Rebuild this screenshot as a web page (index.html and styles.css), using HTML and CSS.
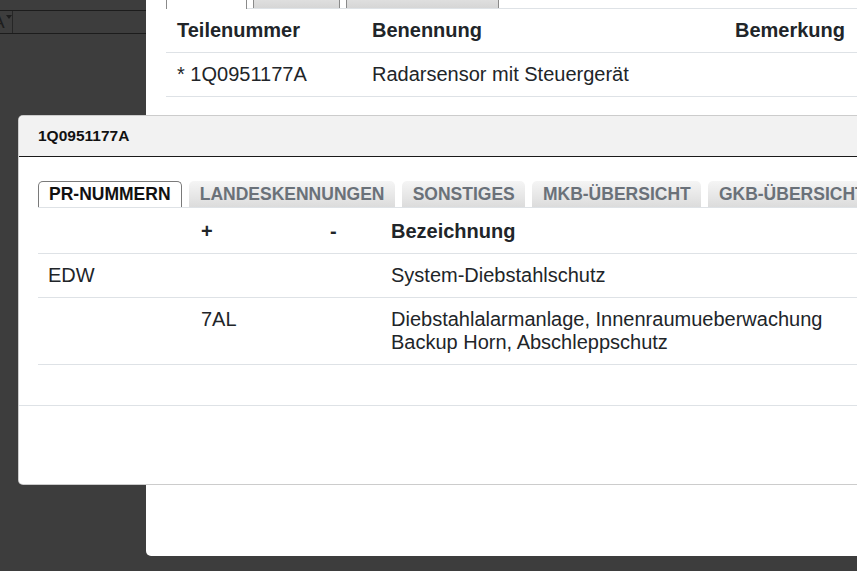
FILE: index.html
```html
<!DOCTYPE html>
<html lang="de">
<head>
    <meta charset="UTF-8">
    <meta name="viewport" content="width=device-width, initial-scale=1.0">
    <title>Teilesuche</title>
    <link rel="stylesheet" href="styles.css">
</head>
<body>
    <div class="layout">
        <!-- Sidebar -->
        <aside class="sidebar">
            <div class="toolbar">
                <div class="font-select"><span class="glyph">A</span><span class="caret"></span></div>
            </div>
        </aside>

        <!-- Parts panel -->
        <main class="panel">
            <div class="panel-tabs">
                <span class="ptab active" style="width: 81px"></span>
                <span class="ptab" style="width: 87px"></span>
                <span class="ptab" style="width: 153px"></span>
            </div>
            <table class="parts">
                <thead>
                    <tr>
                        <th class="c-nr">Teilenummer</th>
                        <th class="c-name">Benennung</th>
                        <th class="c-note">Bemerkung</th>
                    </tr>
                </thead>
                <tbody>
                    <tr>
                        <td>* 1Q0951177A</td>
                        <td>Radarsensor mit Steuergerät</td>
                        <td></td>
                    </tr>
                </tbody>
            </table>
        </main>
    </div>

    <!-- Part detail dialog -->
    <div class="dialog">
        <div class="dialog-header">1Q0951177A</div>
        <div class="dialog-body">
            <ul class="tabs">
                <li class="tab active">PR-Nummern</li>
                <li class="tab">Landeskennungen</li>
                <li class="tab">Sonstiges</li>
                <li class="tab">MKB-Übersicht</li>
                <li class="tab">GKB-Übersicht</li>
            </ul>
            <table class="pr-table">
                <colgroup>
                    <col style="width: 153px">
                    <col style="width: 129px">
                    <col style="width: 61px">
                    <col>
                </colgroup>
                <thead>
                    <tr>
                        <th></th>
                        <th>+</th>
                        <th>-</th>
                        <th>Bezeichnung</th>
                    </tr>
                </thead>
                <tbody>
                    <tr>
                        <td>EDW</td>
                        <td></td>
                        <td></td>
                        <td>System-Diebstahlschutz</td>
                    </tr>
                    <tr>
                        <td></td>
                        <td>7AL</td>
                        <td></td>
                        <td>Diebstahlalarmanlage, Innenraumueberwachung<br>Backup Horn, Abschleppschutz</td>
                    </tr>
                </tbody>
            </table>
        </div>
        <div class="dialog-footer"></div>
    </div>
</body>
</html>
```

FILE: styles.css
```css
* {
    margin: 0;
    padding: 0;
    box-sizing: border-box;
    font-family: "Liberation Sans", Arial, sans-serif;
}

body {
    background-color: #3d3d3d;
    color: #212529;
    height: 571px;
    overflow: hidden;
    position: relative;
}

.layout {
    display: flex;
    align-items: flex-start;
}

/* Sidebar */
.sidebar {
    width: 146px;
    flex-shrink: 0;
    padding-top: 10px;
}

.toolbar {
    height: 24px;
    border-top: 1px solid #1c1c1c;
    border-bottom: 1px solid #1c1c1c;
    display: flex;
}

.font-select {
    width: 13px;
    border-right: 1px solid #262626;
    display: flex;
    overflow: hidden;
}

.font-select .glyph {
    font-size: 19px;
    line-height: 22px;
    color: #1e1e1e;
    margin-left: -8px;
}

.font-select .caret {
    margin: 4px 0 0 1px;
    border-left: 3px solid transparent;
    border-right: 3px solid transparent;
    border-top: 4px solid #1e1e1e;
    height: 0;
}

/* Parts panel */
.panel {
    flex: 1;
    height: 556px;
    background: #fff;
    border-bottom-left-radius: 5px;
    padding-left: 20px;
    overflow: hidden;
}

.panel-tabs {
    display: flex;
    gap: 6px;
    margin-top: -19px;
    border-bottom: 1px solid #dee2e6;
}

.ptab {
    height: 27px;
    border: 1px solid #8a8a8a;
    border-bottom: none;
    background: linear-gradient(#f2f2f2, #d6d6d6);
}

.ptab.active {
    background: #fff;
    height: 28px;
    margin-bottom: -1px;
}

table {
    border-collapse: collapse;
    width: 100%;
}

th, td {
    font-size: 20px;
    text-align: left;
    vertical-align: top;
    padding: 10px 10px;
    border-bottom: 1px solid #dee2e6;
}

th {
    font-weight: bold;
}

.parts {
    table-layout: fixed;
}

.parts .c-nr {
    width: 196px;
    padding-left: 11px;
}

.parts .c-name {
    width: 340px;
}

.parts td:first-child {
    padding-left: 11px;
}

.parts .c-note {
    text-align: right;
    padding-right: 12px;
}

/* Dialog */
.dialog {
    position: absolute;
    left: 18px;
    top: 115px;
    width: 900px;
    height: 370px;
    background: #fff;
    border: 1px solid rgba(0, 0, 0, 0.2);
    border-radius: 5px;
    display: flex;
    flex-direction: column;
}

.dialog-header {
    height: 41px;
    background: #f2f2f2;
    border-bottom: 1px solid #1a1a1a;
    border-radius: 5px 5px 0 0;
    padding-left: 19px;
    font-size: 15.5px;
    font-weight: bold;
    line-height: 40px;
    color: #111;
}

.dialog-body {
    padding: 24px 0 40px 19px;
}

.tabs {
    list-style: none;
    display: flex;
    gap: 7px;
    border-bottom: 1px solid #dee2e6;
}

.tab {
    font-size: 17.5px;
    font-weight: bold;
    text-transform: uppercase;
    color: #6a7179;
    line-height: 26px;
    padding: 0 10.6px;
    border-radius: 5px 5px 0 0;
    background: linear-gradient(#f5f5f5, #dcdcdc);
    white-space: nowrap;
}

.tab.active {
    color: #111;
    background: #fff;
    border: 1px solid #7a7a7a;
    border-bottom: none;
    padding: 0 10.6px 0 10px;
    line-height: 25px;
}

.pr-table {
    table-layout: fixed;
}

.pr-table th {
    padding-top: 12px;
}

.dialog-footer {
    flex: 1;
    border-top: 1px solid #dee2e6;
}
```
